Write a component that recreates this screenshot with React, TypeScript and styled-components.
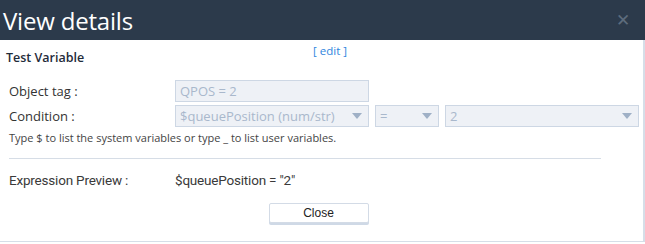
import React from 'react';
import styled, { createGlobalStyle } from 'styled-components';

const GlobalStyle = createGlobalStyle`
  html, body {
    margin: 0;
    padding: 0;
    background: #fff;
  }
  body {
    font-family: 'Open Sans', 'Noto Sans', sans-serif;
    color: #333;
  }
`;

const Modal = styled.div`
  width: 645px;
  height: 244px;
  display: flex;
  flex-direction: column;
`;

const Header = styled.header`
  height: 40px;
  flex: none;
  background: #2c3a4b;
  display: flex;
  align-items: center;
  justify-content: space-between;
  padding: 0 15px 0 3px;
`;

const HeaderTitle = styled.h1`
  margin: 0;
  font-family: 'Open Sans', sans-serif;
  font-weight: 400;
  font-size: 24px;
  color: #fff;
  letter-spacing: -0.2px;
`;

const CloseX = styled.span`
  font-family: 'Liberation Sans', sans-serif;
  font-size: 17px;
  line-height: 1;
  color: #5d6c7d;
  cursor: pointer;
`;

const Body = styled.section`
  height: 201px;
  border-right: 2px solid #d6dee8;
  border-bottom: 1px solid #d6dee8;
  display: flex;
  flex-direction: column;
`;

const TitleRow = styled.div`
  display: flex;
  align-items: flex-start;
  padding-left: 6px;
  height: 30px;
`;

const VarName = styled.div`
  width: 307px;
  padding-top: 9px;
  font-size: 12.5px;
  font-weight: 600;
  color: #1f2b3a;
`;

const EditLink = styled.a`
  padding-top: 3px;
  font-size: 11.5px;
  color: #2f86de;
  cursor: pointer;
`;

const Form = styled.div`
  padding: 10px 0 0 9px;
  display: flex;
  flex-direction: column;
  gap: 3px;
`;

const FieldRow = styled.div`
  display: flex;
  align-items: center;
`;

const Label = styled.div`
  width: 166px;
  font-size: 13px;
  color: #333;
`;

const Control = styled.div<{ $w: number }>`
  width: ${(p) => p.$w}px;
  height: 22px;
  box-sizing: border-box;
  background: #eef1f6;
  border: 1px solid #cdd7e4;
  display: flex;
  align-items: center;
  justify-content: space-between;
  padding: 0 6px 0 4px;
  font-size: 13px;
  color: #a9b8cc;
  white-space: nowrap;
  overflow: hidden;
`;

const Controls = styled.div`
  display: flex;
  gap: 6px;
`;

const Caret = styled.span`
  width: 0;
  height: 0;
  border-left: 5px solid transparent;
  border-right: 5px solid transparent;
  border-top: 6px solid #9fb0c6;
`;

const Hint = styled.div`
  margin-top: 0;
  font-size: 11px;
  color: #444;
`;

const Divider = styled.hr`
  margin: 13px 0 0 9px;
  width: 592px;
  border: 0;
  border-top: 1px solid #d6dde6;
`;

const PreviewRow = styled.div`
  display: flex;
  padding: 13px 0 0 9px;
  font-family: 'Roboto', sans-serif;
  font-size: 13.5px;
  color: #3a3a3a;
  letter-spacing: -0.2px;
`;

const PreviewLabel = styled.div`
  width: 166px;
`;

const Footer = styled.div`
  display: flex;
  justify-content: center;
  padding: 15px 6px 0 0;
`;

const Button = styled.button`
  width: 100px;
  height: 20px;
  box-sizing: border-box;
  background: #fff;
  border: 1px solid #d3dbe6;
  border-radius: 2px;
  box-shadow: 0 2px 0 #cfd9e6;
  font-family: 'Liberation Sans', Arial, sans-serif;
  font-size: 12px;
  color: #222;
  padding: 0;
  cursor: pointer;
`;

function Select({ width, value }: { width: number; value: string }) {
  return (
    <Control $w={width}>
      <span>{value}</span>
      <Caret />
    </Control>
  );
}

export default function App() {
  return (
    <>
      <GlobalStyle />
      <Modal>
        <Header>
          <HeaderTitle>View details</HeaderTitle>
          <CloseX>✕</CloseX>
        </Header>
        <Body>
          <TitleRow>
            <VarName>Test Variable</VarName>
            <EditLink>[ edit ]</EditLink>
          </TitleRow>
          <Form>
            <FieldRow>
              <Label>Object tag :</Label>
              <Control $w={194}>QPOS = 2</Control>
            </FieldRow>
            <FieldRow>
              <Label>Condition :</Label>
              <Controls>
                <Select width={194} value="$queuePosition (num/str)" />
                <Select width={64} value="=" />
                <Select width={194} value="2" />
              </Controls>
            </FieldRow>
            <Hint>Type $ to list the system variables or type _ to list user variables.</Hint>
          </Form>
          <Divider />
          <PreviewRow>
            <PreviewLabel>Expression Preview :</PreviewLabel>
            <div>$queuePosition = "2"</div>
          </PreviewRow>
          <Footer>
            <Button>Close</Button>
          </Footer>
        </Body>
      </Modal>
    </>
  );
}
